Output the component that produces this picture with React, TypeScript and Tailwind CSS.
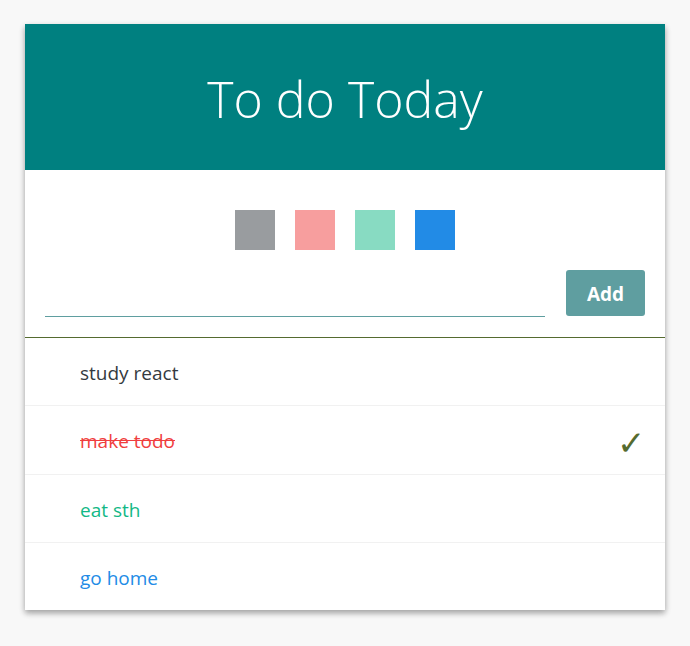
const colors = ['#343a40', '#f03e3e', '#12b886', '#228be6'];

const todos = [
  { id: 1, text: 'study react', color: '#343a40', done: false },
  { id: 2, text: 'make todo', color: '#f03e3e', done: true },
  { id: 3, text: 'eat sth', color: '#12b886', done: false },
  { id: 4, text: 'go home', color: '#228be6', done: false },
];

const App = () => {
  const selected = '#228be6';

  return (
    <div className="min-h-[646px] bg-[#f8f8f8] pt-[24px] font-['Open_Sans',sans-serif]">
      <main className="mx-auto w-[640px] bg-white shadow-[0_3px_6px_rgba(0,0,0,0.16),0_3px_6px_rgba(0,0,0,0.23)]">
        {/* Title */}
        <div className="flex h-[146px] items-center justify-center bg-[#008080] pt-[4px]">
          <h1 className="text-[50px] font-light text-white">To do Today</h1>
        </div>

        {/* Palette + form */}
        <section className="border-b border-[#556b2f] px-[20px] pb-[20px] pt-[40px]">
          <div className="flex justify-center gap-[20px]">
            {colors.map((c) => (
              <div
                key={c}
                className={c === selected ? 'h-[40px] w-[40px]' : 'h-[40px] w-[40px] opacity-50'}
                style={{ backgroundColor: c }}
              />
            ))}
          </div>
          <div className="mt-[20px] flex items-end gap-[21px]">
            <input
              className="h-[47px] flex-1 border-b border-[#5f9ea0] px-1 text-[18px] outline-none"
              defaultValue=""
            />
            <button className="mb-[1px] h-[46px] w-[79px] rounded-[3px] bg-[#5f9ea0] pt-[2px] text-[19px] font-bold text-white">
              Add
            </button>
          </div>
        </section>

        {/* List */}
        <div>
          {todos.map((t, i) => (
            <div
              key={t.id}
              className={
                i < todos.length - 1
                  ? 'flex h-[68.4px] items-center justify-between border-b border-[#f1f1f1] pl-[55px] pr-[20px] pt-[3px]'
                  : 'flex h-[67px] items-center justify-between pl-[55px] pr-[20px] pt-[3px]'
              }
            >
              <span
                className={t.done ? 'text-[19px] line-through' : 'text-[19px]'}
                style={{ color: t.color }}
              >
                {t.text}
              </span>
              {t.done && <span className="text-[34px] leading-none text-[#556b2f]">✓</span>}
            </div>
          ))}
        </div>
      </main>
    </div>
  );
};

export default App;
